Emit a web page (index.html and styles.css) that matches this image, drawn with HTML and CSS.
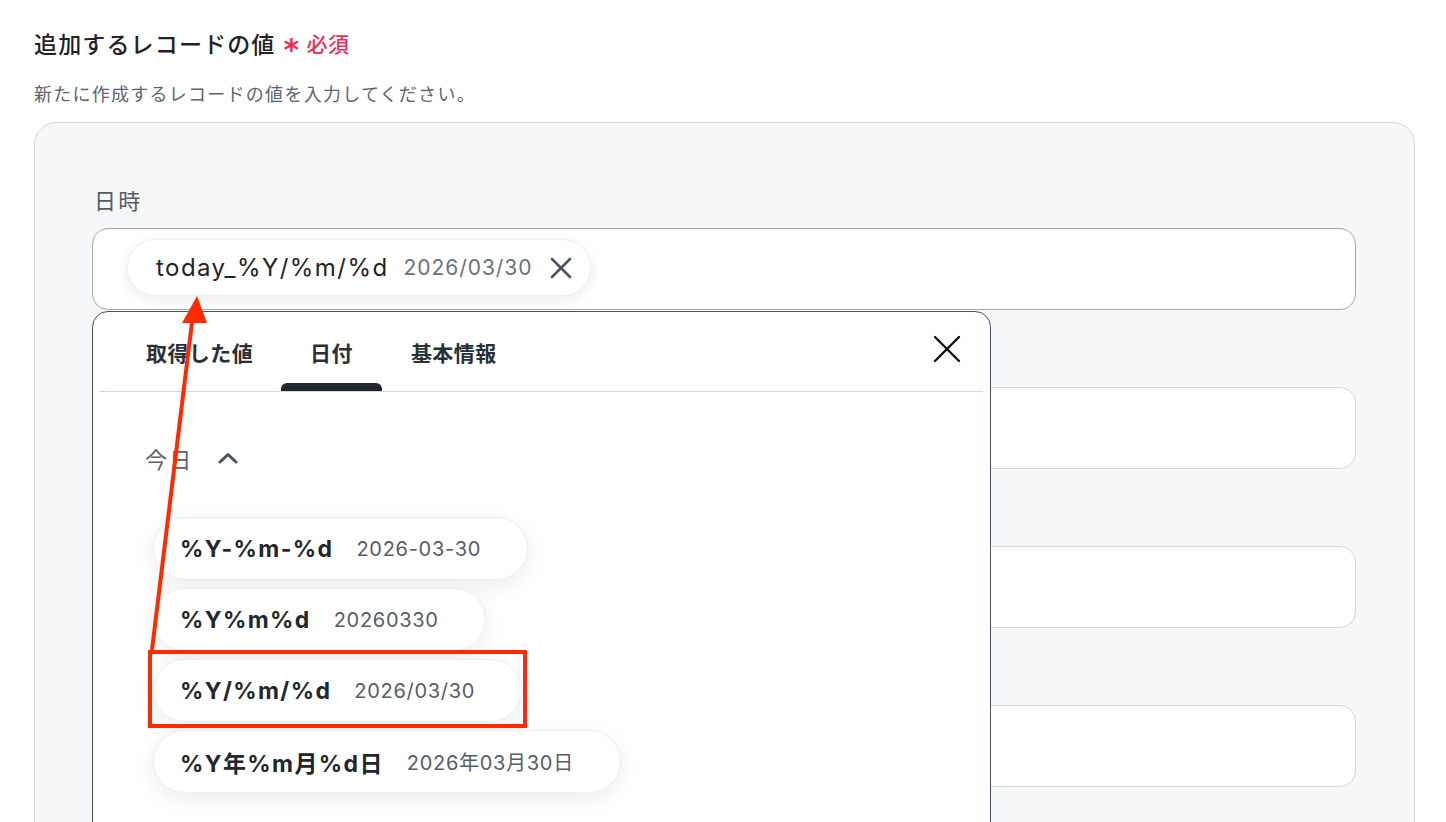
FILE: index.html
```html
<!DOCTYPE html>
<html lang="ja">
<head>
<meta charset="utf-8">
<link rel="stylesheet" href="styles.css">
</head>
<body>
<div class="page">
  <div class="head">
    <h2 class="title">追加するレコードの値<span class="req"><span class="ast">*</span>必須</span></h2>
    <p class="desc">新たに作成するレコードの値を入力してください。</p>
  </div>
  <div class="card">
    <div class="field field-first">
      <div class="label">日時</div>
      <div class="input input-active">
        <span class="chip">
          <span class="chip-key">today_%Y/%m/%d</span>
          <span class="chip-val">2026/03/30</span>
          <svg class="chip-x" width="22" height="22" viewBox="0 0 22 22"><path d="M2 2 L20 20 M20 2 L2 20" stroke="#4b5360" stroke-width="2.6" stroke-linecap="round" fill="none"/></svg>
        </span>
      </div>
      <div class="popup">
        <div class="tabs">
          <div class="tab-list">
            <div class="tab">取得した値</div>
            <div class="tab tab-active">日付</div>
            <div class="tab">基本情報</div>
          </div>
          <svg class="popup-close" width="28" height="28" viewBox="0 0 28 28"><path d="M2 2 L26 26 M26 2 L2 26" stroke="#111" stroke-width="2.4" stroke-linecap="round" fill="none"/></svg>
        </div>
        <div class="section">
          <div class="section-head">
            <span class="section-title">今日</span>
            <svg class="chev" width="20" height="12" viewBox="0 0 20 12"><path d="M2 10 L10 2.5 L18 10" stroke="#4b5360" stroke-width="3" stroke-linecap="round" stroke-linejoin="round" fill="none"/></svg>
          </div>
          <div class="pills">
            <div class="pill"><span class="pill-key">%Y-%m-%d</span><span class="pill-val">2026-03-30</span></div>
            <div class="pill"><span class="pill-key">%Y%m%d</span><span class="pill-val">20260330</span></div>
            <div class="pill"><span class="pill-key">%Y/%m/%d</span><span class="pill-val">2026/03/30</span></div>
            <div class="pill"><span class="pill-key">%Y年%m月%d日</span><span class="pill-val">2026年03月30日</span></div>
          </div>
        </div>
      </div>
    </div>
    <div class="field"><div class="label">&nbsp;</div><div class="input"></div></div>
    <div class="field"><div class="label">&nbsp;</div><div class="input"></div></div>
    <div class="field"><div class="label">&nbsp;</div><div class="input"></div></div>
  </div>
</div>
<svg class="annot" width="1446" height="822" viewBox="0 0 1446 822">
  <rect x="150" y="652" width="375" height="74" fill="none" stroke="#ff2a00" stroke-width="4"/>
  <path d="M152 650 L192 322" stroke="#ff2a00" stroke-width="4" fill="none"/>
  <path d="M197 296 L182 323 L207 323 Z" fill="#ff2a00"/>
</svg>
</body>
</html>
```
FILE: styles.css
```css
* { box-sizing: border-box; }
html, body {
  margin: 0;
  padding: 0;
  background: #ffffff;
  overflow: hidden;
  height: 822px;
}
body {
  font-family: "Inter", "Noto Sans CJK JP", sans-serif;
  color: #1f2329;
  position: relative;
}
.page {
  padding: 28px 31px 0 34px;
}
.title {
  margin: 0;
  font-size: 23px;
  font-weight: 500;
  line-height: 34px;
  color: #1f2329;
  display: flex;
  align-items: center;
  letter-spacing: 0.05em;
}
.req {
  color: #e8315a;
  font-size: 21px;
  margin-left: 8px;
  display: inline-flex;
  align-items: center;
  letter-spacing: 0.02em;
}
.ast {
  font-size: 30px;
  line-height: 1;
  margin-right: 7px;
  position: relative;
  top: 5px;
  font-family: "DejaVu Sans", sans-serif;
  font-weight: 700;
}
.desc {
  margin: 20px 0 0;
  font-size: 18px;
  line-height: 26px;
  color: #5d6470;
  letter-spacing: 0.07em;
}
.card {
  margin-top: 14px;
  background: #f6f7f9;
  border: 1px solid #d3d7de;
  border-radius: 22px;
  padding: 63px 58px 40px 57px;
  height: 760px;
}
.field {
  position: relative;
  margin-bottom: 35px;
}
.label {
  font-size: 22px;
  line-height: 30px;
  color: #535b67;
  margin-left: 2px;
  margin-bottom: 12px;
  letter-spacing: 0.1em;
}
.input {
  height: 82px;
  background: #ffffff;
  border: 1px solid #d3d7de;
  border-radius: 16px;
  display: flex;
  align-items: flex-start;
  padding: 10px 34px 0;
}
.input-active {
  border-color: #a2aab7;
}
.chip {
  height: 57px;
  display: inline-flex;
  align-items: center;
  background: #fff;
  border: 1px solid #eef0f3;
  border-radius: 29px;
  box-shadow: 0 4px 14px rgba(20, 30, 50, 0.08);
  padding: 0 18px 0 28px;
}
.chip-key {
  font-size: 24px;
  color: #1f2329;
  letter-spacing: 0.06em;
}
.chip-val {
  font-size: 21px;
  color: #6b717b;
  margin-left: 15px;
  letter-spacing: 0.045em;
}
.chip-x {
  margin-left: 18px;
}
.popup {
  position: absolute;
  left: 0;
  top: calc(100% + 1px);
  width: 899px;
  height: 560px;
  background: #ffffff;
  border: 1px solid #4b5360;
  border-radius: 16px;
  z-index: 5;
  padding: 0 7px;
}
.tabs {
  display: flex;
  align-items: center;
  justify-content: space-between;
  border-bottom: 1px solid #d3d7de;
  height: 80px;
}
.tab-list {
  display: flex;
  height: 100%;
  padding-left: 17px;
}
.tab {
  padding: 0 29px;
  font-size: 21px;
  font-weight: 700;
  color: #2a2f36;
  display: flex;
  align-items: center;
  position: relative;
  letter-spacing: 0.02em;
}
.tab:first-child {
  padding-right: 28px;
}
.tab-active::after {
  content: "";
  position: absolute;
  left: 0;
  right: 0;
  bottom: 0;
  height: 8px;
  background: #22262d;
  border-radius: 6px 6px 0 0;
}
.popup-close {
  margin-right: 22px;
  margin-top: -6px;
}
.section {
  padding: 48px 0 0 45px;
}
.section-head {
  display: flex;
  align-items: center;
  height: 36px;
}
.section-title {
  font-size: 22px;
  color: #5a616c;
  letter-spacing: 0.1em;
}
.chev {
  margin-left: 25px;
}
.pills {
  margin-top: 41px;
  margin-left: 8px;
  display: flex;
  flex-direction: column;
  align-items: flex-start;
  gap: 8px;
}
.pill {
  height: 63px;
  display: inline-flex;
  align-items: center;
  background: #ffffff;
  border: 1px solid #eceef3;
  border-radius: 32px;
  box-shadow: 0 6px 22px rgba(20, 30, 50, 0.08);
  padding: 0 46px 0 26px;
}
.pill-key {
  font-size: 23px;
  font-weight: 700;
  color: #22262d;
  letter-spacing: 0.06em;
}
.pill-val {
  font-size: 20px;
  color: #555d69;
  margin-left: 23px;
  letter-spacing: 0.035em;
}
.annot {
  position: absolute;
  left: 0;
  top: 0;
  z-index: 10;
  pointer-events: none;
}
```
